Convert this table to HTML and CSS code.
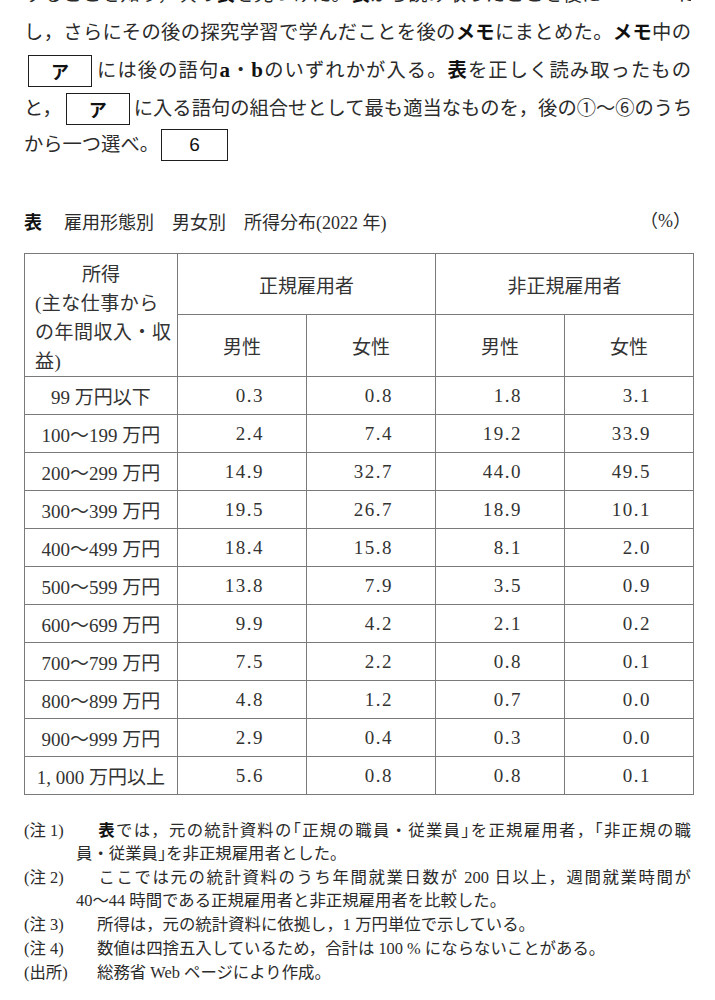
FILE: index.html
```html
<!DOCTYPE html>
<html lang="ja">
<head>
<meta charset="utf-8">
<title>表 雇用形態別 男女別 所得分布</title>
<link rel="stylesheet" href="styles.css">
</head>
<body>
<div class="page">
  <div class="intro">
    <div class="line j">することを知り，次の<b>表</b>を見つけた。<b>表</b>から読み取ったことを後に　　　　に整</div>
    <div class="line j">し，さらにその後の探究学習で学んだことを後の<b>メモ</b>にまとめた。<b>メモ</b>中の</div>
    <div class="line j"><span class="box">ア</span>には後の語句<b class="lat">a</b>・<b class="lat">b</b>のいずれかが入る。<b>表</b>を正しく読み取ったもの</div>
    <div class="line j">と，<span class="box">ア</span>に入る語句の組合せとして最も適当なものを，後の<span class="circ">①</span>～<span class="circ">⑥</span>のうち</div>
    <div class="line">から一つ選べ。<span class="box num">6</span></div>
  </div>

  <div class="caption">
    <span><b>表</b>　雇用形態別　男女別　所得分布<span class="lat">(2022 </span>年<span class="lat">)</span></span>
    <span>（%）</span>
  </div>

  <table class="data">
    <colgroup>
      <col class="c-first"><col class="c-num"><col class="c-num"><col class="c-num"><col class="c-num">
    </colgroup>
    <thead>
      <tr class="h1">
        <th rowspan="2" class="hfirst">
          <div class="hc">所得</div>
          <div class="hl"><span class="lat">(</span>主な仕事から<br>の年間収入・収<br>益<span class="lat">)</span></div>
        </th>
        <th colspan="2">正規雇用者</th>
        <th colspan="2">非正規雇用者</th>
      </tr>
      <tr class="h2">
        <th>男性</th><th>女性</th><th>男性</th><th>女性</th>
      </tr>
    </thead>
    <tbody>
      <tr><td class="lab">99 万円以下</td><td>0.3</td><td>0.8</td><td>1.8</td><td>3.1</td></tr>
      <tr><td class="lab">100～199 万円</td><td>2.4</td><td>7.4</td><td>19.2</td><td>33.9</td></tr>
      <tr><td class="lab">200～299 万円</td><td>14.9</td><td>32.7</td><td>44.0</td><td>49.5</td></tr>
      <tr><td class="lab">300～399 万円</td><td>19.5</td><td>26.7</td><td>18.9</td><td>10.1</td></tr>
      <tr><td class="lab">400～499 万円</td><td>18.4</td><td>15.8</td><td>8.1</td><td>2.0</td></tr>
      <tr><td class="lab">500～599 万円</td><td>13.8</td><td>7.9</td><td>3.5</td><td>0.9</td></tr>
      <tr><td class="lab">600～699 万円</td><td>9.9</td><td>4.2</td><td>2.1</td><td>0.2</td></tr>
      <tr><td class="lab">700～799 万円</td><td>7.5</td><td>2.2</td><td>0.8</td><td>0.1</td></tr>
      <tr><td class="lab">800～899 万円</td><td>4.8</td><td>1.2</td><td>0.7</td><td>0.0</td></tr>
      <tr><td class="lab">900～999 万円</td><td>2.9</td><td>0.4</td><td>0.3</td><td>0.0</td></tr>
      <tr><td class="lab">1, 000 万円以上</td><td>5.6</td><td>0.8</td><td>0.8</td><td>0.1</td></tr>
    </tbody>
  </table>

  <div class="notes">
    <div class="note">
      <div class="nl first full"><span class="lbl">(注 1)</span><b>表</b>では，元の統計資料の｢正規の職員・従業員｣を正規雇用者，｢非正規の職</div>
      <div class="nl">員・従業員｣を非正規雇用者とした。</div>
    </div>
    <div class="note">
      <div class="nl first full"><span class="lbl">(注 2)</span>ここでは元の統計資料のうち年間就業日数が 200 日以上，週間就業時間が</div>
      <div class="nl">40～44 時間である正規雇用者と非正規雇用者を比較した。</div>
    </div>
    <div class="note">
      <div class="nl first"><span class="lbl">(注 3)</span>所得は，元の統計資料に依拠し，1 万円単位で示している。</div>
    </div>
    <div class="note">
      <div class="nl first"><span class="lbl">(注 4)</span>数値は四捨五入しているため，合計は 100 % にならないことがある。</div>
    </div>
    <div class="note">
      <div class="nl first"><span class="lbl">(出所)</span>総務省 Web ページにより作成。</div>
    </div>
  </div>
</div>
</body>
</html>
```

FILE: styles.css
```css
html, body {
  margin: 0;
  padding: 0;
  background: #ffffff;
}

body {
  font-family: "Liberation Serif", "Noto Sans CJK JP", serif;
  color: #2b2b2b;
  overflow: hidden;
}

.page {
  width: 667px;
  padding: 0 24px;
}

b {
  font-weight: 700;
  color: #111;
}

.lat {
  font-family: "Liberation Serif", serif;
}

/* intro paragraph */
.intro {
  margin-top: -26px;
  font-size: 19.3px;
}

.line {
  height: 38px;
  line-height: 38px;
  white-space: nowrap;
  overflow: hidden;
}

.line.j {
  text-align: justify;
  text-align-last: justify;
}

.intro b {
  font-family: "Noto Sans CJK JP", sans-serif;
}

.intro b.lat {
  font-family: "Liberation Serif", serif;
  font-size: 21px;
}

.box {
  display: inline-block;
  width: 62px;
  height: 30px;
  line-height: 30px;
  border: 1.6px solid #1e1e1e;
  margin: 0 4px;
  text-align: center;
  text-align-last: center;
  vertical-align: middle;
  font-family: "Noto Sans CJK JP", sans-serif;
  font-weight: 700;
  font-size: 18px;
  color: #111;
  position: relative;
  top: -2px;
}

.box.num {
  width: 65px;
  font-family: "Liberation Sans", sans-serif;
  font-weight: 400;
  font-size: 19px;
  margin-left: 2px;
}

.circ {
  font-family: "Noto Sans CJK JP", sans-serif;
}

/* caption */
.caption {
  margin-top: 45px;
  display: flex;
  justify-content: space-between;
  font-size: 18px;
  line-height: 24px;
}

.caption b {
  font-family: "Noto Sans CJK JP", sans-serif;
  margin-right: 4px;
}

/* table */
.data {
  margin-top: 18px;
  width: 669px;
  border-collapse: collapse;
  table-layout: fixed;
  font-size: 19px;
  color: #333;
}

.c-first { width: 153px; }
.c-num { width: 129px; }

.data th,
.data td {
  border: 1.4px solid #7a7a7a;
  padding: 0;
}

.data th {
  font-weight: 400;
  text-align: center;
}

.h1 th { height: 60px; }
.h2 th { height: 61px; }

.data th.hfirst {
  vertical-align: top;
  padding: 6px 0 0 10px;
  line-height: 29px;
  white-space: nowrap;
}

.hc {
  text-align: center;
  padding-right: 10px;
}

.hl {
  text-align: left;
  letter-spacing: 0.5px;
}

.data td {
  height: 37px;
  text-align: right;
  padding-right: 42px;
  letter-spacing: 1.5px;
}

.data td.lab {
  text-align: center;
  padding-right: 0;
  letter-spacing: 0;
  white-space: nowrap;
}

/* notes */
.notes {
  margin-top: 23px;
  font-size: 16.4px;
  line-height: 23px;
}

.note {
  padding-left: 52px;
  margin-bottom: 1px;
}

.nl {
  white-space: nowrap;
}

.nl.first {
  text-indent: -52px;
}

.nl.full {
  text-align: justify;
  text-align-last: justify;
}

.lbl {
  display: inline-block;
  width: 73px;
  text-indent: 0;
  text-align: left;
  text-align-last: left;
}

.notes b {
  font-family: "Noto Sans CJK JP", sans-serif;
}
```
